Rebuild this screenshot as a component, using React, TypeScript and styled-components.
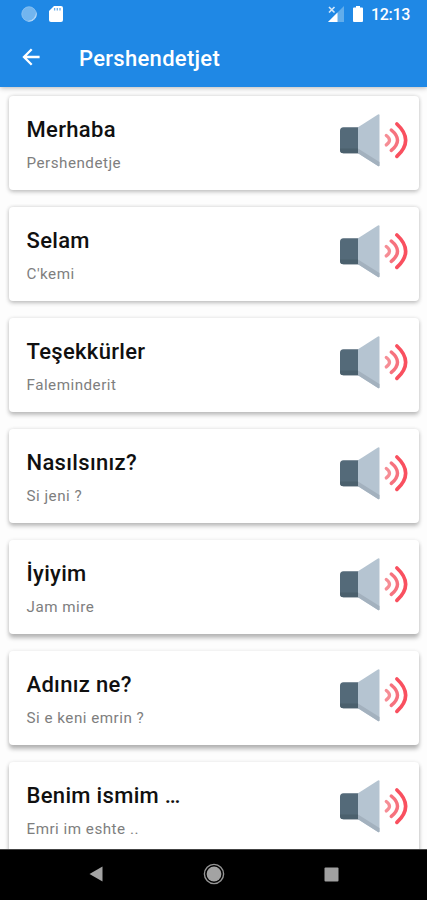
import React from "react";
import styled, { createGlobalStyle } from "styled-components";

const GlobalStyle = createGlobalStyle`
  *, *::before, *::after { box-sizing: border-box; }
  body { margin: 0; background: #fefefe; font-family: Roboto, "Noto Sans", sans-serif; }
`;

const Screen = styled.div`
  display: flex;
  flex-direction: column;
  width: 427px;
  height: 900px;
  overflow: hidden;
  background: #fdfdfd;
`;

const Header = styled.header`
  flex: none;
  height: 87px;
  color: #fff;
  background: #1f88e5;
  box-shadow: 0 1px 5px rgba(0, 0, 0, 0.28);
  z-index: 1;
`;

const StatusBar = styled.div`
  display: flex;
  align-items: center;
  justify-content: space-between;
  height: 28px;
  padding: 0 17px 0 21px;
`;

const StatusGroup = styled.div<{ $gap: number }>`
  display: flex;
  align-items: center;
  gap: ${(p) => p.$gap}px;
`;

const Clock = styled.span`
  font-size: 16px;
  font-weight: 500;
  line-height: 28px;
  letter-spacing: -0.3px;
  padding-top: 1px;
`;

const Toolbar = styled.div`
  display: flex;
  align-items: center;
  height: 59px;
  padding-left: 22px;
  gap: 38px;
`;

const BackButton = styled.button`
  display: flex;
  padding: 0;
  margin-top: -1px;
  border: 0;
  background: none;
  color: inherit;
`;

const Title = styled.h1`
  margin: 2px 0 0;
  font-size: 22px;
  font-weight: 500;
  line-height: 28px;
  letter-spacing: 0.3px;
`;

const List = styled.main`
  flex: 1;
  min-height: 0;
  overflow: hidden;
  display: flex;
  flex-direction: column;
  gap: 17px;
  padding: 9px 8px 0 9px;
`;

const Card = styled.article<{ $depth: number }>`
  flex: none;
  display: flex;
  justify-content: space-between;
  height: 94px;
  padding: 18px 11px 0 17.5px;
  border-radius: 4px;
  background: #fff;
  box-shadow: 0 ${(p) => 1.5 + p.$depth * 0.4}px 4px rgba(0, 0, 0, ${(p) => 0.22 + p.$depth * 0.012}),
    0 0 4px rgba(0, 0, 0, 0.07);
`;

const Phrase = styled.div`
  display: flex;
  flex-direction: column;
`;

const Word = styled.h2`
  margin: 2px 0 0;
  color: #101010;
  font-size: 22px;
  font-weight: 500;
  line-height: 28px;
  letter-spacing: 0.32px;
`;

const Translation = styled.p`
  margin: 9px 0 0;
  color: #7e7e7e;
  font-size: 15.2px;
  line-height: 20px;
  letter-spacing: 0.5px;
`;

const NavBar = styled.nav`
  flex: none;
  display: flex;
  align-items: center;
  justify-content: space-between;
  height: 51px;
  padding: 0 88px 2px 89px;
  background: #000;
  border-top: 1px solid #444;
  z-index: 1;
`;

const BackArrow = () => (
  <svg width="19" height="18" viewBox="0 0 19 18" fill="none" stroke="currentColor" strokeWidth="2.3">
    <path d="M17.600 9H2M9.700 1.300 2 9l7.700 7.700" />
  </svg>
);

const SyncIcon = () => (
  <svg width="16" height="16" viewBox="0 0 16 16">
    <circle cx="8" cy="8" r="7.5" fill="#72b5ef" />
    <path d="M15 5a7.5 7.5 0 0 1-9 10.2A8.8 8.8 0 0 0 15 5Z" fill="#c9e3fa" />
    <circle cx="8" cy="8" r="7.2" fill="none" stroke="#90c5f2" strokeWidth=".6" />
  </svg>
);

const SdCardIcon = () => (
  <svg width="14" height="16" viewBox="0 0 14 16">
    <path d="M5 0h7a2 2 0 0 1 2 2v12a2 2 0 0 1-2 2H2a2 2 0 0 1-2-2V5Z" fill="#fff" />
    <path d="M5.600 2v2.500M8.300 2v2.500M11 2v2.500" stroke="#6aaeea" strokeWidth="1.3" />
  </svg>
);

const SignalIcon = () => (
  <svg width="17" height="16" viewBox="0 0 17 16">
    <path d="M16 0v16H0Z" fill="#62adeb" />
    <path d="M9.5 6.5V16H0Z" fill="#fff" />
    <path d="m1 1 5.5 5.5M6.5 1 1 6.5" stroke="#d4e8fa" strokeWidth="1.6" />
  </svg>
);

const BatteryIcon = () => (
  <svg width="10" height="16" viewBox="0 0 10 16">
    <path d="M3 0h4v1.5h2a1 1 0 0 1 1 1V15a1 1 0 0 1-1 1H1a1 1 0 0 1-1-1V2.500a1 1 0 0 1 1-1h2Z" fill="#fff" />
  </svg>
);

const SpeakerIcon = () => (
  <svg width="68" height="54" viewBox="0 0 68 54">
    <path d="M3.500 13.200H19v26H3.500a3.500 3.500 0 0 1-3.500-3.500V16.700a3.500 3.500 0 0 1 3.500-3.500Z" fill="#546a79" />
    <path d="M0 34.500h19v4.700H3.500A3.500 3.500 0 0 1 0 35.700Z" fill="#4b606d" />
    <path d="M18 13.200 38 .5q1.500-.8 1.500.8v50q0 1.600-1.500.8L18 39.200Z" fill="#b5c4d1" />
    <path d="M18 34.500 39.500 48v3.300q0 1.600-1.500.8L18 39.200Z" fill="#a3b1be" />
    <g fill="none" strokeLinecap="round">
      <path d="M46.300 21.500q6.400 4.700 0 9.400" stroke="#f68d95" strokeWidth="3.300" />
      <path d="M51.300 16q12.400 10.200 0 20.400" stroke="#f6727e" strokeWidth="3.500" />
      <path d="M56.900 10q17.500 16.200 0 32.400" stroke="#f9505f" strokeWidth="3.700" />
    </g>
  </svg>
);

const NavBackIcon = () => (
  <svg width="14" height="16" viewBox="0 0 14 16">
    <path d="M13.500.5v15L.5 8Z" fill="#a3a3a3" />
  </svg>
);

const NavHomeIcon = () => (
  <svg width="22" height="22" viewBox="0 0 22 22">
    <circle cx="11" cy="11" r="9.600" fill="none" stroke="#959595" strokeWidth="1.400" />
    <circle cx="11" cy="11" r="7.400" fill="#a3a3a3" />
  </svg>
);

const NavRecentIcon = () => (
  <svg width="15" height="15" viewBox="0 0 15 15">
    <rect x=".5" y=".5" width="14" height="14" rx="1" fill="#a0a0a0" />
  </svg>
);

const phrases = [
  { word: "Merhaba", translation: "Pershendetje" },
  { word: "Selam", translation: "C'kemi" },
  { word: "Teşekkürler", translation: "Faleminderit" },
  { word: "Nasılsınız?", translation: "Si jeni ?" },
  { word: "İyiyim", translation: "Jam mire" },
  { word: "Adınız ne?", translation: "Si e keni emrin ?" },
  { word: "Benim ismim …", translation: "Emri im eshte .." },
];

export default function App() {
  return (
    <>
      <GlobalStyle />
      <Screen>
        <Header>
          <StatusBar>
            <StatusGroup $gap={12}>
              <SyncIcon />
              <SdCardIcon />
            </StatusGroup>
            <StatusGroup $gap={8}>
              <SignalIcon />
              <BatteryIcon />
              <Clock>12:13</Clock>
            </StatusGroup>
          </StatusBar>
          <Toolbar>
            <BackButton aria-label="Back">
              <BackArrow />
            </BackButton>
            <Title>Pershendetjet</Title>
          </Toolbar>
        </Header>
        <List>
          {phrases.map((p, i) => (
            <Card key={p.word} $depth={i}>
              <Phrase>
                <Word>{p.word}</Word>
                <Translation>{p.translation}</Translation>
              </Phrase>
              <SpeakerIcon />
            </Card>
          ))}
        </List>
        <NavBar>
          <NavBackIcon />
          <NavHomeIcon />
          <NavRecentIcon />
        </NavBar>
      </Screen>
    </>
  );
}
